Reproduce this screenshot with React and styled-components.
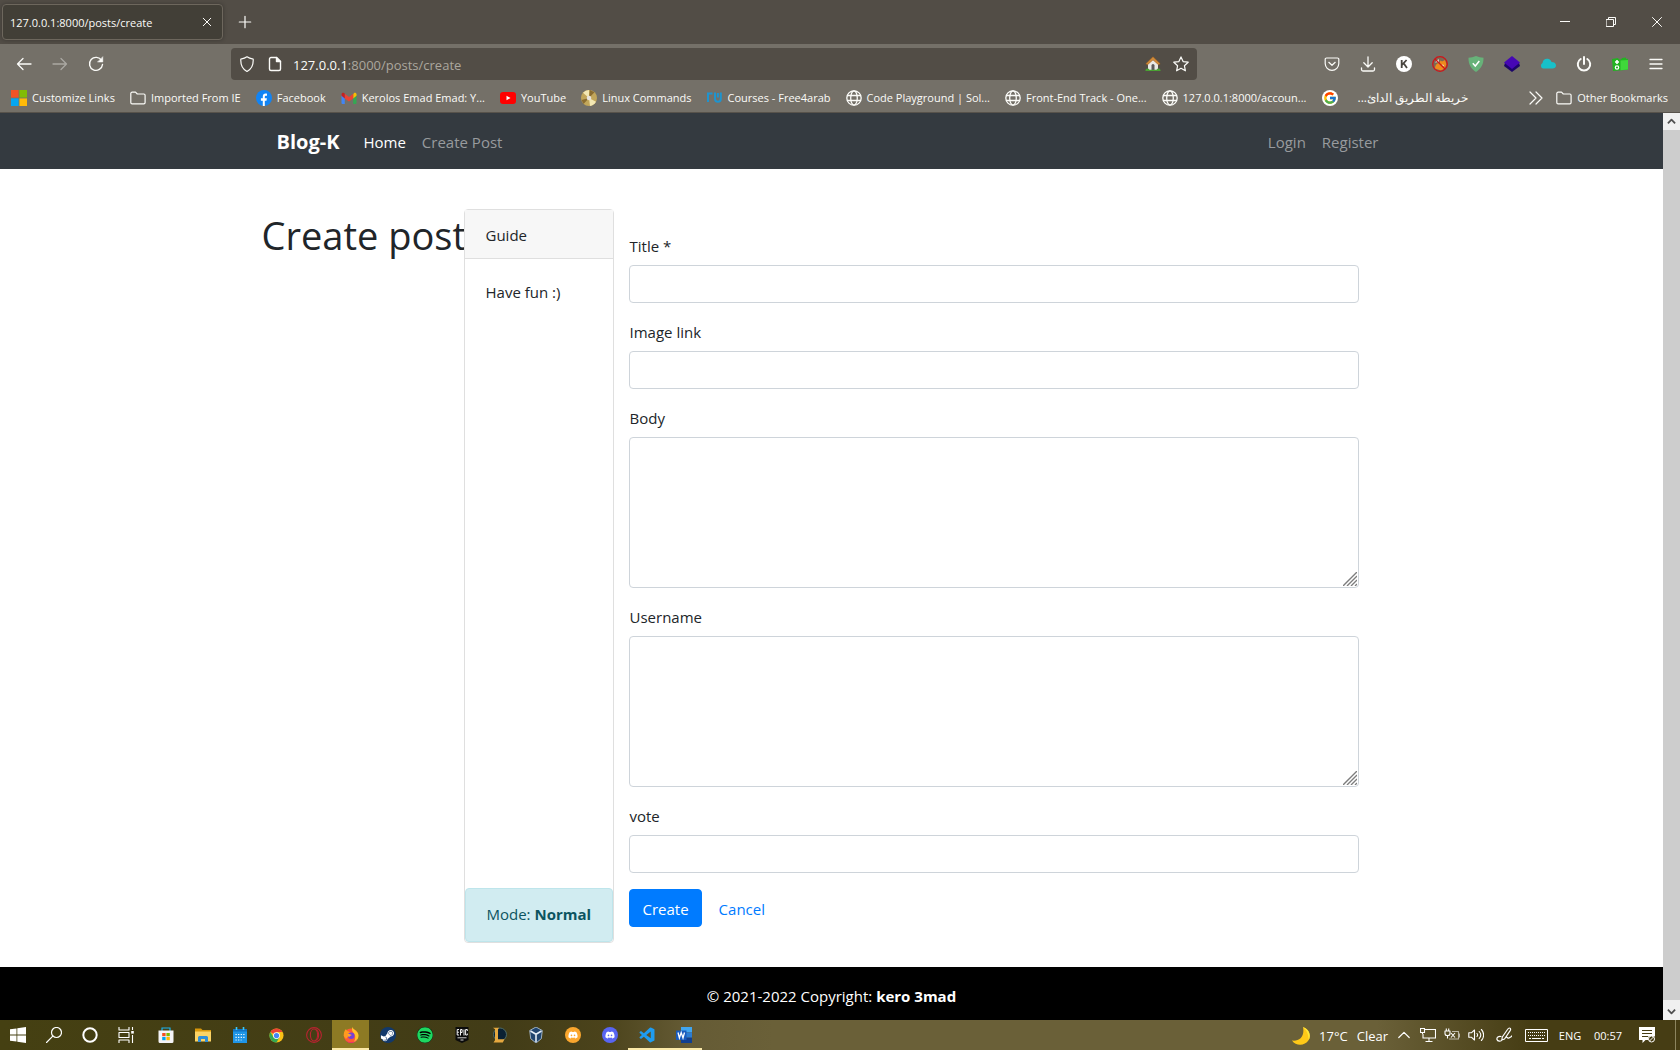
import React from "react";
import styled, { createGlobalStyle, css } from "styled-components";
import { FaDiscord, FaSpotify, FaSteamSymbol } from "react-icons/fa";
import { FcGoogle } from "react-icons/fc";
import { BiLogoVisualStudio } from "react-icons/bi";

const Global = createGlobalStyle`
  *, *::before, *::after { box-sizing: border-box; }
  html, body, #root { height: 100%; }
  body { margin: 0; font-family: "Open Sans", "Noto Sans", sans-serif; background: #fff; overflow: hidden; }
  button, input, textarea { font: inherit; }
  svg { display: block; flex: none; }
`;

const Desktop = styled.div`
  display: flex;
  flex-direction: column;
  height: 100vh;
`;

/* ---------- browser chrome ---------- */

const TitleBar = styled.div`
  display: flex;
  align-items: center;
  height: 44px;
  padding-left: 2px;
  background: #524d46;
  color: #fbfbf8;
  flex: none;
`;

const Tab = styled.div`
  display: flex;
  align-items: center;
  justify-content: space-between;
  width: 221px;
  height: 36px;
  padding: 0 6px 0 7px;
  border: 1px solid #6d675d;
  border-radius: 4px;
  background: #423f37;
  font-size: 11px;
  box-shadow: 0 0 4px rgba(0, 0, 0, 0.3);
`;

const IconButton = styled.button`
  display: flex;
  align-items: center;
  justify-content: center;
  width: ${(p) => p.$w || 36}px;
  height: ${(p) => p.$h || 32}px;
  padding: 0;
  border: 0;
  background: none;
  color: inherit;
  opacity: ${(p) => (p.$dim ? 0.4 : 1)};
  flex: none;
`;

const Spacer = styled.div`
  flex: 1;
`;

const Toolbar = styled.div`
  display: flex;
  align-items: center;
  height: 40px;
  padding: 0 6px;
  background: #747068;
  color: #fbfbf8;
  flex: none;
`;

const Address = styled.div`
  display: flex;
  align-items: center;
  flex: 1;
  height: 32px;
  margin: 0 117px;
  padding: 0 2px;
  border-radius: 4px;
  background: #524d46;
`;

const Url = styled.div`
  flex: 1;
  padding: 2px 0 0 4px;
  font-size: 13px;
  color: #aba79e;
  b { font-weight: 400; color: #fbfbf8; }
`;

const BookmarkBar = styled.div`
  display: flex;
  align-items: center;
  gap: 15px;
  height: 29px;
  padding: 0 12px 0 11px;
  border-bottom: 1px solid #57524b;
  background: #747068;
  color: #fbfbf8;
  flex: none;
`;

const Bookmark = styled.a`
  display: flex;
  align-items: center;
  gap: ${(p) => (p.$wide ? 20 : 5)}px;
  color: inherit;
  font-size: ${(p) => (p.$wide ? 12 : 11)}px;
  line-height: 16px;
  text-decoration: none;
  white-space: nowrap;
`;

const BookmarkEnd = styled.div`
  display: flex;
  align-items: center;
  gap: 12px;
`;

/* ---------- web page ---------- */

const Viewport = styled.div`
  display: flex;
  flex: 1;
  min-height: 0;
`;

const Page = styled.div`
  display: flex;
  flex-direction: column;
  flex: 1;
  min-width: 0;
  color: #212529;
  font-size: 15px;
  line-height: 24px;
`;

const Nav = styled.nav`
  height: 56px;
  background: #343a40;
  flex: none;
`;

const Container = styled.div`
  width: 100%;
  max-width: 1140px;
  margin: 0 auto;
`;

const NavInner = styled(Container)`
  display: flex;
  align-items: center;
  gap: 16px;
  height: 100%;
  padding: 2px 23px 0 15px;
`;

const Brand = styled.a`
  margin-right: 8px;
  color: #fff;
  font-size: 20px;
  font-weight: 700;
  text-decoration: none;
`;

const NavLink = styled.a`
  color: ${(p) => (p.$active ? "#fff" : "#989b9e")};
  text-decoration: none;
`;

const Main = styled(Container).attrs({ as: "main" })`
  display: flex;
  flex: 1;
  align-items: flex-start;
  padding: 40px 0 24px;
`;

const Heading = styled.h1`
  width: 202px;
  margin: 2px 0 8px;
  font-size: 38px;
  line-height: 48px;
  font-weight: 400;
  white-space: nowrap;
  flex: none;
`;

const Card = styled.aside`
  display: flex;
  flex-direction: column;
  align-self: stretch;
  width: 150px;
  border: 1px solid #dfdfdf;
  border-radius: 4px;
  flex: none;
`;

const CardHeader = styled.div`
  padding: 13px 20px 11px 21px;
  border-bottom: 1px solid #dfdfdf;
  background: #f7f7f7;
`;

const CardBody = styled.div`
  flex: 1;
  padding: 21px;
`;

const Alert = styled.div`
  padding: 13px 20px 15px 21px;
  border: 1px solid #bee5eb;
  border-radius: 4px;
  background: #d1ecf1;
  color: #0c5460;
  white-space: nowrap;
`;

const Form = styled.form`
  display: flex;
  flex-direction: column;
  gap: 16px;
  width: 760px;
  padding: 24px 15px 16px;
`;

const Field = styled.div`
  display: flex;
  flex-direction: column;
  gap: 8px;
`;

const FieldLabel = styled.label`
  padding: 2px 0 0 1px;
  line-height: 22px;
`;

const control = css`
  display: block;
  width: 100%;
  padding: 6px 12px;
  border: 1px solid #ced4da;
  border-radius: 4px;
  background: #fff;
  color: #495057;
`;

const Input = styled.input`
  ${control}
  height: 38px;
`;

const AreaBox = styled.div`
  position: relative;
  svg { position: absolute; right: 2px; bottom: 2px; pointer-events: none; }
`;

const Area = styled.textarea`
  ${control}
  height: 151px;
  resize: none;
`;

const Actions = styled.div`
  display: flex;
  gap: 5px;
`;

const Submit = styled.button`
  height: 38px;
  padding: 2px 12px 0 13px;
  border: 1px solid #007bff;
  border-radius: 4px;
  background: #007bff;
  color: #fff;
`;

const Cancel = styled.a`
  padding: 8px 12px 6px;
  color: #007bff;
  text-decoration: none;
`;

const Footer = styled.footer`
  padding: 17px 0 12px;
  background: #000;
  color: #fff;
  text-align: center;
  flex: none;
`;

const Scrollbar = styled.div`
  display: flex;
  flex-direction: column;
  width: 17px;
  background: #f0f0f0;
  color: #505050;
  flex: none;
`;

const Thumb = styled.div`
  flex: 1;
  background: #cdcdcd;
  margin-bottom: 3px;
`;

/* ---------- taskbar ---------- */

const Taskbar = styled.div`
  display: flex;
  align-items: center;
  height: 30px;
  background: linear-gradient(90deg, #454012 0%, #423c17 30%, #4b431b 36%, #655b35 41%, #6a6038 46%, #6a6038 82%, #463d14 91%, #463d14 100%);
  color: #fff;
  flex: none;
`;

const Group = styled.div`
  display: flex;
  margin-right: ${(p) => p.$after || 0}px;
`;

const TaskButton = styled.button`
  display: flex;
  align-items: center;
  justify-content: center;
  width: ${(p) => (p.$system ? 36 : 37)}px;
  height: 30px;
  padding: 0;
  border: 0;
  background: ${(p) => (p.$active ? "#8d7a24" : "none")};
  box-shadow: ${(p) => (p.$open ? "inset 0 -2px #fbe9a8" : "none")};
  color: #fff;
`;

const Weather = styled.div`
  display: flex;
  align-items: center;
  gap: 9px;
  margin-right: 4px;
  padding-top: 1px;
  font-size: 13px;
`;

const Label = styled.span`
  width: ${(p) => p.$w}px;
  font-size: 11px;
  text-align: center;
  white-space: nowrap;
`;

const Edge = styled.div`
  width: 5px;
  height: 30px;
  margin-left: 9px;
  border-left: 1px solid #8c855f;
`;

/* ---------- icons ---------- */

const Line = ({ size = 16, box = 16, w = 1.2, children, ...rest }) => (
  <svg width={size} height={size} viewBox={`0 0 ${box} ${box}`} fill="none" stroke="currentColor" strokeWidth={w} strokeLinecap="round" strokeLinejoin="round" aria-hidden="true" {...rest}>
    {children}
  </svg>
);

const Art = ({ size = 16, children }) => (
  <svg width={size} height={size} viewBox="0 0 16 16" aria-hidden="true">{children}</svg>
);

const CloseIcon = ({ size = 10, w = 1 }) => <Line size={size} w={(w * 16) / size}><path d="M2 2l12 12M14 2L2 14" /></Line>;
const PlusIcon = () => <Line size={14} w={1.4}><path d="M8 1.500v13M1.500 8h13" /></Line>;
const BackIcon = () => <Line w={1.3}><path d="M15 8H1.500M7 2.500L1.500 8 7 13.500" /></Line>;
const ForwardIcon = () => <Line w={1.3}><path d="M1 8h13.500M9 2.500L14.500 8 9 13.500" /></Line>;
const ReloadIcon = () => <Line w={1.4}><path d="M13.600 4.500A6.500 6.500 0 1 0 14.500 8.500" /><path d="M14.800 1v5H9.800z" fill="currentColor" strokeWidth=".5" /></Line>;
const ShieldIcon = () => <Line><path d="M8 .8c2 1.500 4 2 6.200 2.400C14.500 9 12.500 13.300 8 15.500 3.500 13.300 1.500 9 1.800 3.200 4 2.800 6 2.300 8 .8z" /></Line>;
const PageIcon = () => <Line w={1.4}><path d="M9.500 1.500H4A1.500 1.500 0 0 0 2.500 3v10A1.500 1.500 0 0 0 4 14.500h8a1.500 1.500 0 0 0 1.500-1.500V5.500z" /><path d="M9.500 1.500v4h4z" fill="currentColor" /></Line>;
const StarIcon = () => <Line><path d="M8 .9l2.100 4.700 5.100.6-3.800 3.500 1 5.100L8 12.300l-4.400 2.500 1-5.100L.8 6.200l5.100-.6z" /></Line>;
const HouseIcon = () => (
  <Art>
    <path d="M3 8l5-5 5 5v6H3z" fill="#e9e9e4" />
    <path d="M8 .8L.8 7.800l1.700 1L8 4l5.500 4.800 1.700-1z" fill="#cf8b3b" stroke="#a7621c" strokeWidth=".5" />
    <path d="M6.500 9.500a1.500 1.500 0 0 1 3 0V14h-3z" fill="#5d5a58" />
    <path d="M.5 14c1-2 3-1.800 4-.2h7c1-1.600 3-1.800 4 .2v1H.5z" fill="#4aa233" />
  </Art>
);
const PocketIcon = () => <Line><path d="M2.500 2h11A1.300 1.300 0 0 1 14.800 3.300V7.500a6.800 6.800 0 0 1-13.600 0V3.300A1.300 1.300 0 0 1 2.500 2z" /><path d="M4.800 6.300L8 9.300l3.200-3" /></Line>;
const DownloadIcon = () => <Line w={1.3}><path d="M8 .8v10M3.800 6.800L8 11l4.200-4.200M1.500 11.800v1.700A1.500 1.500 0 0 0 3 15h10a1.500 1.500 0 0 0 1.500-1.500v-1.700" /></Line>;
const KIcon = () => <Art><circle cx="8" cy="8" r="8" fill="#fff" /><path d="M5.700 4v8M10.600 4L6 8.800M7.800 7.500L11 12" stroke="#4a4640" strokeWidth="1.800" fill="none" /></Art>;
const NoFoxIcon = () => <Art><circle cx="8" cy="8" r="7" fill="#7b6a55" /><path d="M3 12.500c0-3 1.500-5.500 4.500-5.500l1-2.500 1.500 1 3-1.500 1.500 4.500-2 4-3.500 2z" fill="#ee8a1d" /><path d="M3 6.500L6.500 3l.5 3zM10 8.500l2 .5-1 1.500z" fill="#f2ece2" /><circle cx="8" cy="8" r="7.300" fill="none" stroke="#d01418" strokeWidth="1.300" /><path d="M3 3l10 10" stroke="#d01418" strokeWidth="1.300" /></Art>;
const GuardIcon = () => <Art><path d="M8 0c2.500 1 5 1.600 7.500 1.800C15.700 8 13 13 8 16 3 13 .3 8 .5 1.800 3 1.600 5.500 1 8 0z" fill="#67b279" /><path d="M4.800 7.200L7.300 10l4-5" fill="none" stroke="#fff" strokeWidth="1.500" /></Art>;
const LayersIcon = () => <Art><path d="M1 7l7-1 7 1 1 3-8 6-8-6z" fill="#1c0569" /><path d="M8 0l8 6.500L8 13 0 6.500z" fill="#4607b5" /></Art>;
const CloudIcon = () => <Art><path d="M3 12.500A3 3 0 0 1 2.500 7C3 3.500 5.500 2.300 8 2.800c2 .4 3 1.700 3.500 3.200 2.500 0 4.500 1.200 4.500 3.300s-1.500 3.200-3.500 3.200z" fill="#18c0c9" /></Art>;
const PowerIcon = () => <Line w={2}><path d="M4.700 3a6.200 6.200 0 1 0 6.600 0M8 1v7" /></Line>;
const GreenFolderIcon = () => <Art><path d="M0 3l6-1 1 1.500h2L10 2l4-.5V3l2-.2v11L1 15z" fill="#22b422" /><path d="M8.500 4.500L16 4v9.500l-7.500.8z" fill="#3fd83a" /><path d="M5 4v4M3 6h4" stroke="#fff" strokeWidth="1.600" /><circle cx="5" cy="11.500" r="1.700" fill="none" stroke="#fff" strokeWidth="1.200" /></Art>;
const MenuIcon = () => <Line w={1.3}><path d="M2 3.500h12M2 8h12M2 12.500h12" /></Line>;
const MinimizeIcon = () => <Line size={10} box={10} w={1}><path d="M0 4.500h10" /></Line>;
const RestoreIcon = () => <Line size={10} box={10} w={1} strokeLinejoin="miter"><path d="M.5 2.500h7v7h-7zM2.500 2V.5h7v7H8" /></Line>;

const MicrosoftIcon = () => <Art><path d="M0 0h7.600v7.600H0z" fill="#f35325" /><path d="M8.400 0H16v7.600H8.400z" fill="#81bc06" /><path d="M0 8.400h7.600V16H0z" fill="#05a6f0" /><path d="M8.400 8.400H16V16H8.400z" fill="#ffba08" /></Art>;
const FolderIcon = () => <Line><path d="M.8 12.500v-9A1.300 1.300 0 0 1 2.100 2.200h3.400L7.300 4h6.500a1.300 1.300 0 0 1 1.300 1.300v7.200a1.300 1.300 0 0 1-1.300 1.300H2.100A1.300 1.300 0 0 1 .8 12.500z" /></Line>;
const FacebookIcon = () => <Art><circle cx="8" cy="8" r="8" fill="#1184f5" /><path d="M6.800 16v-5.300H4.900V8.300h1.900V6.600c0-2 1-3 2.900-3 .6 0 1 .1 1.300.2v2h-1c-.9 0-1.200.4-1.200 1.200v1.300h2.100l-.4 2.400H8.800V16z" fill="#fff" /></Art>;
const GmailIcon = () => <Art><path d="M.5 4h3.300v10H1.500a1 1 0 0 1-1-1z" fill="#4285f4" /><path d="M12.200 4h3.300v9a1 1 0 0 1-1 1h-2.300z" fill="#34a853" /><path d="M12.200 4.500l.8-1.500c1-.8 2.500 0 2.500 1.300v1.500l-3.300 2.600z" fill="#fbbc04" /><path d="M3.800 3.700L8 6.900l4.200-3.200v4.700L8 11.600 3.800 8.400z" fill="#ea4335" /><path d="M.5 5.800V4.300C.5 3 2 2.200 3.100 3l.7.700v4.700z" fill="#c5221f" /></Art>;
const YouTubeIcon = () => <Art><rect y="2" width="16" height="12" rx="3" fill="#f00" /><path d="M6.500 5.700L10.500 8l-4 2.300z" fill="#fff" /></Art>;
const DiscIcon = () => <Art><circle cx="8" cy="8" r="8" fill="#c2a65a" /><path d="M8 8L2 2.700A8 8 0 0 1 8 0zM8 8l7 3.800A8 8 0 0 1 9 16z" fill="#f3e7b2" /><path d="M8 8l1-8 4.500 2.200zM8 8l-7.500 2 2 4z" fill="#8a6c30" /><circle cx="8" cy="8" r="2.300" fill="#e8e4dc" /></Art>;
const FreeIcon = () => <Art><path d="M1 12V3.500h4.500M8 2.500v6.300a2.900 2.900 0 0 0 5.800 0V2.500M10.900 3v4.500" fill="none" stroke="#1e94cf" strokeWidth="2" /></Art>;
const GlobeIcon = () => <Line w={1.3}><circle cx="8" cy="8" r="7.200" /><ellipse cx="8" cy="8" rx="3.300" ry="7.200" /><path d="M1.500 5.500h13M1.500 10.500h13" /></Line>;
const GoogleIcon = () => <Art><circle cx="8" cy="8" r="8" fill="#fff" /><FcGoogle x="1" y="1" size={14} /></Art>;
const OverflowIcon = () => <Line><path d="M2 2l6 6-6 6M8 2l6 6-6 6" /></Line>;

const ChevronUp = () => <Line size={9} box={10} w={2} strokeLinecap="butt"><path d="M1 7l4-4 4 4" /></Line>;
const ChevronDown = () => <Line size={9} box={10} w={2} strokeLinecap="butt"><path d="M1 3l4 4 4-4" /></Line>;
const GripIcon = () => <Line size={14} box={14} w={1.4} stroke="#7d7d7d" strokeLinecap="butt"><path d="M0 14L14 0M4 14L14 4M8 14l6-6M12 14l2-2" /></Line>;

const WindowsIcon = () => <Art><path d="M0 2.300l6.500-.9v6.200H0zM7.300 1.300L16 0v7.600H7.300zM0 8.400h6.500v6.200L0 13.700zM7.300 8.400H16V16l-8.700-1.200z" fill="#fff" /></Art>;
const SearchIcon = () => <Line><circle cx="10.500" cy="5.500" r="5" /><path d="M6.800 9.200L.5 15.500" /></Line>;
const CortanaIcon = () => <Line w={2}><circle cx="8" cy="8" r="6.700" /></Line>;
const TaskViewIcon = () => <Line w={1.1} strokeLinecap="butt"><path d="M1 0v3h10V0M1 16v-3h10v3M1 5.500h10v5H1zM14.500 0v3M14.500 8v8" /><path d="M13.200 4h2.600v2.600h-2.600z" fill="currentColor" stroke="none" /></Line>;
const StoreIcon = () => <Art><path d="M4 4V1h8v3" fill="none" stroke="#1bb2ef" strokeWidth="1.200" /><path d="M.5 3.500h15v11a1.500 1.500 0 0 1-1.500 1.500H2a1.500 1.500 0 0 1-1.500-1.500z" fill="#f4f4f6" /><path d="M4.200 6h3.400v3.200H4.200z" fill="#f25022" /><path d="M8.400 6h3.400v3.200H8.400z" fill="#7fba00" /><path d="M4.200 10h3.400v3.200H4.200z" fill="#00a4ef" /><path d="M8.400 10h3.400v3.200H8.400z" fill="#ffb900" /></Art>;
const ExplorerIcon = () => <Art><path d="M0 1.500h6L7.500 3H16v5H0z" fill="#d9980b" /><path d="M0 4.500h16v10H0z" fill="#fbd365" /><path d="M3 15V10.500A1.500 1.500 0 0 1 4.500 9h7a1.500 1.500 0 0 1 1.500 1.500V15h-3v-3H6v3z" fill="#2f8fd8" /></Art>;
const CalendarIcon = () => <Art><path d="M1 2h14v14H1z" fill="#1f95e6" /><path d="M1 2h14v2.500H1z" fill="#1173c4" /><path d="M4.500 0v3M11.500 0v3" stroke="#3cc8f5" strokeWidth="1.600" /><path d="M3.500 7.500h9M3.500 10.300h9M3.500 13h6" stroke="#fff" strokeWidth="1.200" strokeDasharray="1.200 1.400" /></Art>;
const ChromeIcon = () => <Art size={15}><circle cx="8" cy="8" r="7.500" fill="#fbc116" /><path d="M8 8L1.500 4.250A7.500 7.500 0 0 1 14.500 4.250H8z" fill="#ea4335" /><path d="M1.500 4.250A7.500 7.500 0 0 0 8 15.500L11.200 9.900 8 8 4.800 9.900z" fill="#34a853" /><circle cx="8" cy="8" r="3.600" fill="#fff" /><circle cx="8" cy="8" r="2.800" fill="#4285f4" /></Art>;
const OperaIcon = () => <Line stroke="#b82330" w={1.1}><circle cx="8" cy="8" r="7.400" /><ellipse cx="8" cy="8" rx="3.600" ry="6" /><path d="M10 2.800c3.500 1.500 3.500 9 0 10.400" /></Line>;
const FirefoxIcon = () => (
  <Art>
    <circle cx="8" cy="8.600" r="7.200" fill="#ff5a36" />
    <path d="M9.500 0c.5 3 5.800 3.500 6 8.500.1 3.500-2.500 6-5 7 2-3 2.500-6.500.5-9C9.500 4.500 8.300 3 9.500 0z" fill="#ffc229" />
    <path d="M.8 9C.5 6 1.500 3.500 3 2c.3 1.200 1 2 2.300 2.200L8 6 3 12z" fill="#ff9a1f" />
    <path d="M1 10c1.500 6 10 7.500 13.500 1.500-1 3-4 4.500-6.500 4.500S2 14 1 10z" fill="#f0247d" />
    <circle cx="8.200" cy="8.800" r="3.300" fill="#7542d8" />
    <path d="M4.500 7.500c1.500-1 2.500.2 4 .3.300 1.200-2 1-2.200 2.200-1-.3-1.800-1.300-1.800-2.500z" fill="#ffa52b" />
  </Art>
);
const EpicIcon = () => <Art><path d="M1.500 0h13v13L8 16l-6.500-3z" fill="#0b0b0b" /><path d="M5 2.500H3.200v5.500H5M3.200 5.200H5M6.500 8.500v-6h1.600v3H6.500M10 2.500v6M13.300 4V2.500h-1.700V8h1.700V6.500" fill="none" stroke="#f2f2f2" strokeWidth="1" /><path d="M3.500 10.800h9M6.500 13h3" stroke="#ccc" strokeWidth="1" /></Art>;
const LeagueIcon = () => <Art><circle cx="9" cy="7.500" r="6.500" fill="#0a2133" stroke="#4d6a66" /><path d="M2 .8h6L7 2.500v9.700h6.500L11.800 15.500H2.500l1.500-2.200v-11z" fill="#e5a83f" /></Art>;
const BoxIcon = () => <Art><path d="M8 0l6.300 3.500-1 8.200L8 16l-5.300-4.300-1-8.200z" fill="#20456f" stroke="#b9cbe0" strokeWidth=".8" /><path d="M2.500 4L8 7.200 13.500 4M8 7.200V15" fill="none" stroke="#e4edf6" strokeWidth="1.600" /></Art>;
const WordIcon = () => <Art><path d="M5 0h11v5.300H5z" fill="#41a5ee" /><path d="M5 5.300h11v5.400H5z" fill="#2b7cd3" /><path d="M5 10.700h11V16H5z" fill="#103f91" /><path d="M0 3.500h10.500v9.500H0z" fill="#185abd" /><path d="M2 5.500l1.400 5.500 1.800-5.500L7 11l1.500-5.500" fill="none" stroke="#fff" strokeWidth="1.300" /></Art>;

const Round = styled.span`
  display: flex;
  align-items: center;
  justify-content: center;
  width: 16px;
  height: 16px;
  border-radius: 50%;
  background: ${(p) => p.$bg};
`;

const MoonIcon = () => <svg width="18" height="18" viewBox="0 0 18 18" aria-hidden="true"><path d="M11 0c6 2 8.500 8.500 5.500 13.300C13 19 4 19.500 0 13.500c7 1 13-3.500 11-13.500z" fill="#ffc918" /><path d="M11 0c6 2 8.500 8.500 5.500 13.300C17 8 15 3.500 11 0z" fill="#ffe83c" /></svg>;
const TrayUpIcon = () => <Line size={12} box={12}><path d="M.8 8.500L6 3.300l5.200 5.200" /></Line>;
const MonitorIcon = () => <Line strokeLinecap="butt" strokeLinejoin="miter" w={1.1}><path d="M5 2.500h10.500v8.500H3V7M9 11v3M5.500 14.500h7" /><path d="M.5 1.500h4v4h-4zM2.500 5.500V7" /></Line>;
const BatteryIcon = () => <Line strokeLinecap="butt" w={1.1}><path d="M1 4h5v2.500a2 2 0 0 1-2 2h-1a2 2 0 0 1-2-2zM2.300 1.500V4M4.700 1.500V4M3.500 8.500v3" /><path d="M7 6l4 4.500M11 6L7 10.500" /><path d="M8 4.500h6.500v7.500H5M14.500 7h1v3h-1" opacity=".6" /></Line>;
const SpeakerIcon = () => <Line w={1.1}><path d="M.8 5.800h2.500L6.500 3v10L3.300 10.200H.8zM9 6.500c.8 1 .8 2 0 3M11.200 4.500c2 2.200 2 4.800 0 7M13.400 2.500c3 3.200 3 7.800 0 11" /></Line>;
const PenIcon = () => <Line><path d="M13.500 1c1.500 0 1.300 1.800.5 2.800L8.500 12 5.800 13 6.300 10 11.500 2.500C12 1.700 12.800 1 13.500 1zM5 9.500c-2.500-.5-4.500 1-4 3s4 2.200 5 .5M10.500 10c1 1 2 1.500 3 .8s2-1 2.300-2" /></Line>;
const KeyboardIcon = () => <svg width="23" height="13" viewBox="0 0 23 13" fill="none" stroke="#fff" aria-hidden="true"><path d="M.5.5h22v12H.5z" /><path d="M3 3.500h17M3 6.500h17" strokeDasharray="1 1" /><path d="M4 9.500h2M7 9.500h9M17 9.500h2" /></svg>;
const NoticeIcon = () => <Art><path d="M0 0h16v9.500H9.500V13H6.500L3.500 16V13H0z" fill="#fff" /><path d="M3 3.500h10M3 6.500h10M3 9.500h6" stroke="#463d14" /><circle cx="12.500" cy="12" r="3" fill="#463d14" stroke="#fff" /><path d="M10.500 14l4-4" stroke="#fff" /></Art>;

/* ---------- data ---------- */

const bookmarks = [
  ["Customize Links", MicrosoftIcon],
  ["Imported From IE", FolderIcon],
  ["Facebook", FacebookIcon],
  ["Kerolos Emad Emad: Y...", GmailIcon],
  ["YouTube", YouTubeIcon],
  ["Linux Commands", DiscIcon],
  ["Courses - Free4arab", FreeIcon],
  ["Code Playground | Sol...", GlobeIcon],
  ["Front-End Track - One...", GlobeIcon],
  ["127.0.0.1:8000/accoun...", GlobeIcon],
];

const extensions = [
  ["Pocket", PocketIcon],
  ["Downloads", DownloadIcon],
  ["Account", KIcon],
  ["Fox blocker", NoFoxIcon],
  ["Ad guard", GuardIcon],
  ["Layers", LayersIcon],
  ["Cloud", CloudIcon],
  ["Power", PowerIcon],
  ["File manager", GreenFolderIcon],
  ["Menu", MenuIcon],
];

const systemTasks = [
  ["Start", WindowsIcon],
  ["Search", SearchIcon],
  ["Cortana", CortanaIcon],
  ["Task view", TaskViewIcon],
];

const tasks = [
  { name: "Store", icon: <StoreIcon /> },
  { name: "Explorer", icon: <ExplorerIcon /> },
  { name: "Calendar", icon: <CalendarIcon /> },
  { name: "Chrome", icon: <ChromeIcon /> },
  { name: "Opera", icon: <OperaIcon /> },
  { name: "Firefox", icon: <FirefoxIcon />, active: true, open: true },
  { name: "Steam", icon: <Round $bg="#12396b"><FaSteamSymbol size={15} /></Round> },
  { name: "Spotify", icon: <Round $bg="#000"><FaSpotify size={16} color="#1ed760" /></Round> },
  { name: "Epic Games", icon: <EpicIcon /> },
  { name: "League of Legends", icon: <LeagueIcon /> },
  { name: "VirtualBox", icon: <BoxIcon /> },
  { name: "Discord Canary", icon: <Round $bg="#faa62e"><FaDiscord size={10} /></Round> },
  { name: "Discord", icon: <Round $bg="#5865f2"><FaDiscord size={10} /></Round> },
  { name: "Code", icon: <BiLogoVisualStudio size={18} color="#1f9cf0" />, open: true },
  { name: "Word", icon: <WordIcon />, open: true },
];

const tray = [
  ["Show hidden icons", TrayUpIcon],
  ["Network", MonitorIcon],
  ["Battery", BatteryIcon],
  ["Volume", SpeakerIcon],
];

function TextField({ id, label }) {
  return (
    <Field>
      <FieldLabel htmlFor={id}>{label}</FieldLabel>
      <Input id={id} type="text" />
    </Field>
  );
}

function AreaField({ id, label }) {
  return (
    <Field>
      <FieldLabel htmlFor={id}>{label}</FieldLabel>
      <AreaBox>
        <Area id={id} />
        <GripIcon />
      </AreaBox>
    </Field>
  );
}

export default function App() {
  return (
    <Desktop>
      <Global />
      <TitleBar>
        <Tab>
          127.0.0.1:8000/posts/create
          <IconButton $w={18} $h={18} aria-label="Close tab"><CloseIcon /></IconButton>
        </Tab>
        <IconButton $w={44} aria-label="New tab"><PlusIcon /></IconButton>
        <Spacer />
        <IconButton $w={46} aria-label="Minimize"><MinimizeIcon /></IconButton>
        <IconButton $w={46} aria-label="Restore"><RestoreIcon /></IconButton>
        <IconButton $w={46} aria-label="Close"><CloseIcon size={12} /></IconButton>
      </TitleBar>
      <Toolbar>
        <IconButton aria-label="Back"><BackIcon /></IconButton>
        <IconButton $dim aria-label="Forward"><ForwardIcon /></IconButton>
        <IconButton aria-label="Reload"><ReloadIcon /></IconButton>
        <Address>
          <IconButton $w={28} aria-label="Protection"><ShieldIcon /></IconButton>
          <IconButton $w={28} aria-label="Site information"><PageIcon /></IconButton>
          <Url><b>127.0.0.1</b>:8000/posts/create</Url>
          <IconButton $w={28} aria-label="Home"><HouseIcon /></IconButton>
          <IconButton $w={28} aria-label="Bookmark this page"><StarIcon /></IconButton>
        </Address>
        {extensions.map(([name, Icon]) => (
          <IconButton key={name} aria-label={name}><Icon /></IconButton>
        ))}
      </Toolbar>
      <BookmarkBar>
        {bookmarks.map(([name, Icon]) => (
          <Bookmark key={name} href="#"><Icon />{name}</Bookmark>
        ))}
        <Bookmark href="#" $wide><GoogleIcon /><bdi dir="rtl">خريطة الطريق الدائ...</bdi></Bookmark>
        <Spacer />
        <BookmarkEnd>
          <IconButton $w={16} $h={16} aria-label="More bookmarks"><OverflowIcon /></IconButton>
          <Bookmark href="#"><FolderIcon />Other Bookmarks</Bookmark>
        </BookmarkEnd>
      </BookmarkBar>
      <Viewport>
        <Page>
          <Nav>
            <NavInner>
              <Brand href="#">Blog-K</Brand>
              <NavLink href="#" $active>Home</NavLink>
              <NavLink href="#">Create Post</NavLink>
              <Spacer />
              <NavLink href="#">Login</NavLink>
              <NavLink href="#">Register</NavLink>
            </NavInner>
          </Nav>
          <Main>
            <Heading>Create post</Heading>
            <Card>
              <CardHeader>Guide</CardHeader>
              <CardBody>Have fun :)</CardBody>
              <Alert>Mode: <b>Normal</b></Alert>
            </Card>
            <Form>
              <TextField id="title" label="Title *" />
              <TextField id="image" label="Image link" />
              <AreaField id="body" label="Body" />
              <AreaField id="username" label="Username" />
              <TextField id="vote" label="vote" />
              <Actions>
                <Submit type="button">Create</Submit>
                <Cancel href="#">Cancel</Cancel>
              </Actions>
            </Form>
          </Main>
          <Footer>© 2021-2022 Copyright: <b>kero 3mad</b></Footer>
        </Page>
        <Scrollbar>
          <IconButton $w={17} $h={17} aria-label="Scroll up"><ChevronUp /></IconButton>
          <Thumb />
          <IconButton $w={17} $h={17} aria-label="Scroll down"><ChevronDown /></IconButton>
        </Scrollbar>
      </Viewport>
      <Taskbar>
        <Group $after={3}>
          {systemTasks.map(([name, Icon]) => (
            <TaskButton key={name} $system aria-label={name}><Icon /></TaskButton>
          ))}
        </Group>
        <Group>
          {tasks.map((t) => (
            <TaskButton key={t.name} $active={t.active} $open={t.open} aria-label={t.name}>{t.icon}</TaskButton>
          ))}
        </Group>
        <Spacer />
        <Weather><MoonIcon /><span>17°C</span><span>Clear</span></Weather>
        {tray.map(([name, Icon]) => (
          <IconButton key={name} $w={24} $h={30} aria-label={name}><Icon /></IconButton>
        ))}
        <IconButton $w={32} $h={30} aria-label="Ink workspace"><PenIcon /></IconButton>
        <IconButton $w={32} $h={30} aria-label="Keyboard"><KeyboardIcon /></IconButton>
        <Label $w={36}>ENG</Label>
        <Label $w={40}>00:57</Label>
        <IconButton $w={38} $h={30} aria-label="Notifications"><NoticeIcon /></IconButton>
        <Edge />
      </Taskbar>
    </Desktop>
  );
}
